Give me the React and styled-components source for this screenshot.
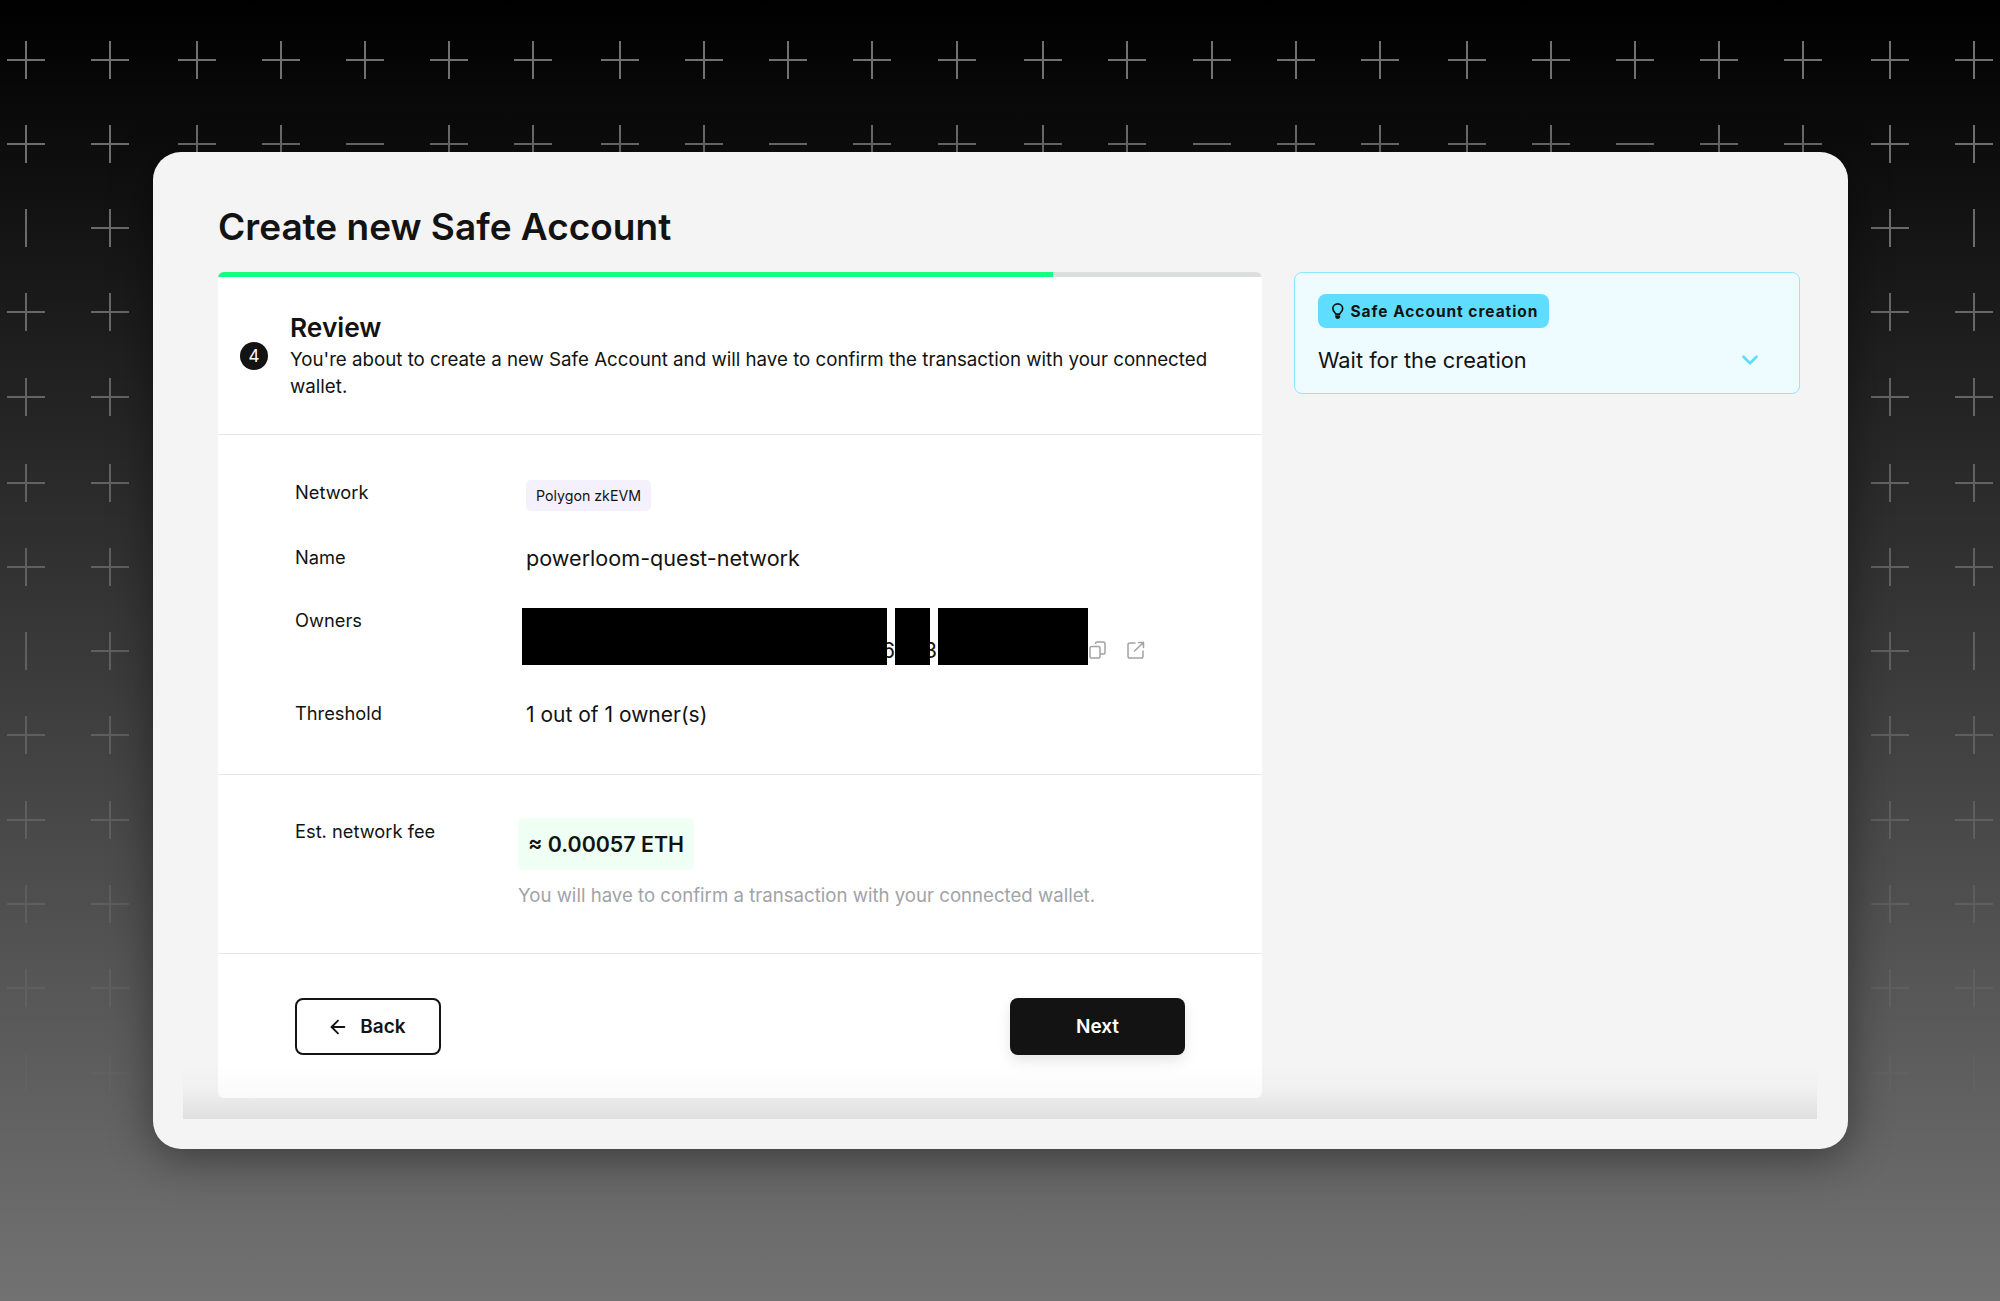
import React from "react";
import styled, { createGlobalStyle } from "styled-components";
import { ArrowLeft, ChevronDown } from "lucide-react";

const Global = createGlobalStyle`
  html, body { margin: 0; padding: 0; }
  body { font-family: "Inter", "Liberation Sans", sans-serif; color: #121312; }
  * { box-sizing: border-box; }
`;

const Page = styled.div`
  position: relative;
  width: 2000px;
  height: 1301px;
  overflow: hidden;
  padding: 152px 152px 0 153px;
  background: linear-gradient(180deg, #000 0%, #727272 100%);
`;

const Backdrop = styled.svg`
  position: absolute;
  inset: 0;
  filter: blur(0.45px);
`;

const Card = styled.main`
  position: relative;
  width: 1695px;
  height: 997px;
  padding: 50px 48px 50px 65px;
  background: #f4f4f4;
  border-radius: 28px;
  box-shadow: 0 8px 44px rgba(0, 0, 0, 0.42);
`;

const BottomFade = styled.div`
  position: absolute;
  left: 30px;
  right: 31px;
  bottom: 30px;
  height: 56px;
  background: linear-gradient(180deg, rgba(0, 0, 0, 0) 0%, rgba(0, 0, 0, 0.015) 45%, rgba(0, 0, 0, 0.085) 100%);
`;

const PageTitle = styled.h1`
  margin: 0 0 20px;
  font-size: 37px;
  line-height: 50px;
  font-weight: 600;
`;

const Columns = styled.div`
  position: relative;
  display: grid;
  grid-template-columns: 1044px 506px;
  gap: 32px;
  align-items: start;
`;

const Panel = styled.section`
  height: 826px;
  border-radius: 6px;
  overflow: hidden;
  background: linear-gradient(180deg, #fff 0, #fff calc(100% - 34px), #fafafa 100%);
`;

const Progress = styled.div`
  height: 5px;
  background: #dcdedd;
`;

const ProgressFill = styled.div`
  height: 100%;
  background: #12ff80;
`;

const PanelHeader = styled.header`
  display: flex;
  align-items: center;
  gap: 22px;
  height: 158px;
  padding: 0 40px 0 22px;
  border-bottom: 1px solid #e6e6e6;
`;

const StepBadge = styled.span`
  flex: none;
  display: flex;
  align-items: center;
  justify-content: center;
  width: 28px;
  height: 28px;
  border-radius: 50%;
  background: #121312;
  color: #fff;
  font-size: 17px;
`;

const StepTitle = styled.h2`
  margin: 0;
  font-size: 26.300px;
  line-height: 34px;
  font-weight: 600;
`;

const StepText = styled.p`
  margin: 1px 0 0;
  font-size: 18.720px;
  line-height: 27px;
`;

const Section = styled.div`
  display: flex;
  flex-direction: column;
  gap: 34px;
  padding: ${(p) => p.$top}px 77px ${(p) => p.$bottom}px;
  border-bottom: 1px solid #e6e6e6;
`;

const Row = styled.div`
  display: grid;
  grid-template-columns: ${(p) => p.$label || 231}px 1fr;
  align-items: start;
  margin-top: ${(p) => p.$shift || 0}px;
`;

const Label = styled.div`
  font-size: 18.300px;
  line-height: 27px;
  margin-top: ${(p) => p.$offset ?? -1}px;
`;

const Value = styled.div`
  font-size: ${(p) => p.$size || 21.6}px;
  line-height: 27px;
`;

const NetworkChip = styled.span`
  display: inline-flex;
  align-items: center;
  height: 31px;
  padding: 0 10px;
  border-radius: 5px;
  background: #f4f1fd;
  font-size: 14.200px;
`;

const AddressRow = styled.div`
  display: flex;
  align-items: flex-start;
  height: 57px;
  margin-left: -4px;
`;

const Redaction = styled.div`
  position: relative;
  z-index: 1;
  flex: none;
  width: ${(p) => p.$w}px;
  height: 57px;
  background: #000;
`;

const Peek = styled.span`
  flex: none;
  width: ${(p) => p.$w}px;
  margin-top: 29px;
  font-size: 21px;
  line-height: 27px;
  text-indent: ${(p) => p.$indent}px;
  white-space: nowrap;
`;

const IconSlot = styled.span`
  display: flex;
  align-items: center;
  justify-content: center;
  width: 20px;
  height: 20px;
  margin: 32px 0 0 ${(p) => p.$gap}px;
  color: #a1a3a7;
`;

const FeeColumn = styled.div`
  display: flex;
  flex-direction: column;
`;

const FeeChip = styled.div`
  align-self: flex-start;
  display: flex;
  align-items: center;
  height: 52px;
  padding: 0 10px;
  border-radius: 6px;
  background: #effff4;
  font-size: 21.400px;
  font-weight: 600;
`;

const Helper = styled.p`
  margin: 12px 0 0;
  font-size: 18.640px;
  line-height: 27px;
  color: #a1a3a7;
`;

const Footer = styled.footer`
  display: flex;
  justify-content: space-between;
  padding: 44px 77px;
`;

const BaseButton = styled.button`
  display: flex;
  align-items: center;
  justify-content: center;
  gap: ${(p) => p.$gap || 0}px;
  height: 57px;
  border-radius: 8px;
  font: 600 19px "Inter", sans-serif;
`;

const BackButton = styled(BaseButton)`
  width: 146px;
  border: 2px solid #121312;
  background: #fff;
  color: #121312;
  padding-right: 9px;
`;

const NextButton = styled(BaseButton)`
  width: 175px;
  border: 0;
  background: #121312;
  color: #fff;
  box-shadow: 0 6px 14px rgba(0, 0, 0, 0.1);
`;

const TipCard = styled.aside`
  height: 122px;
  padding: 21px 23px 0;
  border: 1.5px solid #8fe6ff;
  border-radius: 8px;
  background: #effcff;
`;

const TipChip = styled.div`
  display: inline-flex;
  align-items: center;
  gap: 7px;
  height: 34px;
  padding: 0 11px 0 14px;
  border-radius: 8px;
  background: #5fddff;
  font-size: 15.500px;
  font-weight: 700;
  letter-spacing: 0.950px;
`;

const TipRow = styled.div`
  display: flex;
  align-items: center;
  justify-content: space-between;
  margin-top: 15px;
  padding-right: 13.500px;
  font-size: 21.800px;
  line-height: 34px;
  color: #5fddff;
`;

const TipText = styled.span`
  color: #121312;
`;

const colX = [26, 110, 197, 281, 365, 449, 533, 620, 704, 788, 872, 957, 1043, 1127, 1212, 1296, 1380, 1467, 1551, 1635, 1719, 1803, 1890, 1974];
const rowY = [60, 144, 228, 312, 397, 483, 567, 651, 735, 820, 904, 988, 1073];

function Crosses() {
  const items = [];
  rowY.forEach((y, r) => {
    colX.forEach((x, c) => {
      const verticalOnly = (c === 0 || c === 23) && r % 5 === 2;
      const horizontalOnly = r === 1 && c % 5 === 4;
      const op = Math.max(0.02, 0.46 * (1 - y / 1130));
      items.push(
        <g key={`${r}-${c}`} stroke="#fff" strokeWidth="2" opacity={op}>
          {!verticalOnly && <line x1={x - 19} x2={x + 19} y1={y} y2={y} />}
          {!horizontalOnly && <line x1={x} x2={x} y1={y - 19} y2={y + 19} />}
        </g>
      );
    });
  });
  return (
    <Backdrop width="2000" height="1301" viewBox="0 0 2000 1301" aria-hidden="true">
      {items}
    </Backdrop>
  );
}

const CopyIcon = () => (
  <svg width="17" height="18" viewBox="0 0 17 18" fill="none" stroke="currentColor" strokeWidth="1.500" strokeLinejoin="round">
    <rect x="1" y="5.500" width="10" height="11.500" rx="1.800" />
    <path d="M6.500 3V2.800C6.500 1.800 7.300 1 8.300 1h5.900c1 0 1.800.8 1.800 1.800v8.400c0 1-.8 1.800-1.800 1.800H11" />
  </svg>
);

const LinkIcon = () => (
  <svg width="18" height="18" viewBox="0 0 18 18" fill="none" stroke="currentColor" strokeWidth="1.500" strokeLinecap="round" strokeLinejoin="round">
    <path d="M8 2H2.800C1.800 2 1 2.800 1 3.800v11.400c0 1 .8 1.800 1.800 1.800h11.400c1 0 1.800-.8 1.800-1.800V10" />
    <path d="M11.500 1.500H16.500V6.500M16.500 1.500 7.500 10" />
  </svg>
);

const BulbIcon = () => (
  <svg width="11.500" height="16.500" viewBox="0 0 14 20" fill="none" stroke="#121312" strokeWidth="2" strokeLinecap="round">
    <path d="M4.500 13.500C4.300 11.500 1 10.500 1 6.800 1 3.500 3.700 1 7 1s6 2.500 6 5.800c0 3.700-3.300 4.700-3.500 6.700Z" strokeLinejoin="round" />
    <path d="M4.500 15.500h5v1.600c0 1-.8 1.700-1.700 1.700H6.200c-.9 0-1.700-.7-1.700-1.700Z" fill="#121312" strokeWidth="1" />
  </svg>
);

export default function App() {
  return (
    <>
      <Global />
      <Page>
        <Crosses />
        <Card>
          <BottomFade />
          <PageTitle>Create new Safe Account</PageTitle>
          <Columns>
            <Panel>
              <Progress>
                <ProgressFill style={{ width: "80%" }} />
              </Progress>
              <PanelHeader>
                <StepBadge>4</StepBadge>
                <div>
                  <StepTitle>Review</StepTitle>
                  <StepText>
                    You're about to create a new Safe Account and will have to confirm the transaction with your connected wallet.
                  </StepText>
                </div>
              </PanelHeader>
              <Section $top={45} $bottom={46}>
                <Row>
                  <Label>Network</Label>
                  <div>
                    <NetworkChip>Polygon zkEVM</NetworkChip>
                  </div>
                </Row>
                <Row>
                  <Label>Name</Label>
                  <Value>powerloom-quest-network</Value>
                </Row>
                <Row $shift={2}>
                  <Label>Owners</Label>
                  <AddressRow>
                    <Redaction $w={365} />
                    <Peek $w={7.5} $indent={-5}>6</Peek>
                    <Redaction $w={35.500} />
                    <Peek $w={7.500} $indent={-6}>3</Peek>
                    <Redaction $w={150} />
                    <IconSlot $gap={0}><CopyIcon /></IconSlot>
                    <IconSlot $gap={18}><LinkIcon /></IconSlot>
                  </AddressRow>
                </Row>
                <Row $shift={2}>
                  <Label>Threshold</Label>
                  <Value $size={21}>1 out of 1 owner(s)</Value>
                </Row>
              </Section>
              <Section $top={43} $bottom={44}>
                <Row $label={223}>
                  <Label $offset={0}>Est. network fee</Label>
                  <FeeColumn>
                    <FeeChip>≈ 0.00057 ETH</FeeChip>
                    <Helper>You will have to confirm a transaction with your connected wallet.</Helper>
                  </FeeColumn>
                </Row>
              </Section>
              <Footer>
                <BackButton $gap={11}><ArrowLeft size={22} strokeWidth={2} />Back</BackButton>
                <NextButton>Next</NextButton>
              </Footer>
            </Panel>
            <TipCard>
              <TipChip><BulbIcon />Safe Account creation</TipChip>
              <TipRow>
                <TipText>Wait for the creation</TipText>
                <ChevronDown size={26} strokeWidth={2.5} />
              </TipRow>
            </TipCard>
          </Columns>
        </Card>
      </Page>
    </>
  );
}
